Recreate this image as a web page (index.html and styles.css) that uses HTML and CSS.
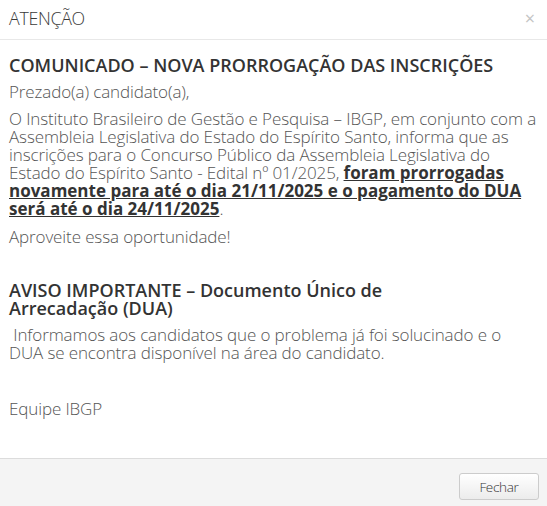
FILE: index.html
```html
<!DOCTYPE html>
<html lang="pt-BR">
<head>
<meta charset="utf-8">
<link rel="stylesheet" href="styles.css">
</head>
<body>
<div class="modal">
  <div class="modal-header">
    <h4 class="modal-title">ATENÇÃO</h4>
    <span class="close">×</span>
  </div>
  <div class="modal-body">
    <h3 class="h-main">COMUNICADO – NOVA PRORROGAÇÃO DAS INSCRIÇÕES</h3>
    <p class="p">Prezado(a) candidato(a),</p>
    <p class="p">O Instituto Brasileiro de Gestão e Pesquisa – IBGP, em conjunto com a Assembleia Legislativa do Estado do Espírito Santo, informa que as inscrições para o Concurso Público da Assembleia Legislativa do Estado do Espírito Santo - Edital nº 01/2025, <strong class="u">foram prorrogadas novamente para até o dia 21/11/2025 e o pagamento do DUA será até o dia 24/11/2025</strong>.</p>
    <p class="p p-after">Aproveite essa oportunidade!</p>
    <h3 class="h-warn">AVISO IMPORTANTE – Documento Único de<br>Arrecadação (DUA)</h3>
    <p class="p">&nbsp;Informamos aos candidatos que o problema já foi solucinado e o DUA se encontra disponível na área do candidato.</p>
    <p class="p sign">Equipe IBGP</p>
  </div>
  <div class="modal-footer">
    <button class="btn">Fechar</button>
  </div>
</div>
</body>
</html>
```
FILE: styles.css
```css
html, body {
  margin: 0;
  padding: 0;
  background: #fff;
}
body {
  font-family: "Open Sans", "Segoe UI", sans-serif;
  width: 547px;
  height: 506px;
  overflow: hidden;
}
.modal {
  display: flex;
  flex-direction: column;
  height: 506px;
}
.modal-header {
  height: 40px;
  box-sizing: border-box;
  border-bottom: 1px solid #e8e8e8;
  display: flex;
  align-items: center;
  justify-content: space-between;
  padding: 0 12px 3px 9px;
}
.modal-title {
  margin: 0;
  font-size: 17.8px;
  font-weight: 300;
  color: #3a3a3a;
  letter-spacing: -0.3px;
}
.close {
  font-size: 18px;
  color: #c4c4c4;
  line-height: 1;
}
.modal-body {
  flex: 1;
  padding: 16px 9px 0 9px;
  color: #555;
  font-size: 17px;
  font-weight: 300;
  line-height: 18px;
  letter-spacing: -0.12px;
}
.h-main, .h-warn {
  margin: 0;
  font-size: 18px;
  font-weight: 600;
  color: #333;
  line-height: 18px;
  letter-spacing: 0;
}
.p {
  margin: 9px 0 0 0;
}
.p-after {
  margin-top: 10px;
}
.u {
  font-weight: 700;
  color: #333;
  text-decoration: underline;
  letter-spacing: 0;
}
.h-warn {
  margin-top: 35px;
}
.sign {
  margin-top: 38px;
}
.modal-footer {
  height: 48px;
  box-sizing: border-box;
  background: #f4f4f4;
  border-top: 1px solid #dcdcdc;
  display: flex;
  align-items: center;
  justify-content: flex-end;
  padding: 0 8px 0 0;
}
.btn {
  font-family: "Open Sans", sans-serif;
  font-size: 13.5px;
  font-weight: 300;
  color: #333;
  background: linear-gradient(#fff, #ececec);
  border: 1px solid #ccc;
  border-radius: 3px;
  height: 27px;
  width: 80px;
  padding: 0;
  margin-top: 8px;
  letter-spacing: -0.3px;
}
```
